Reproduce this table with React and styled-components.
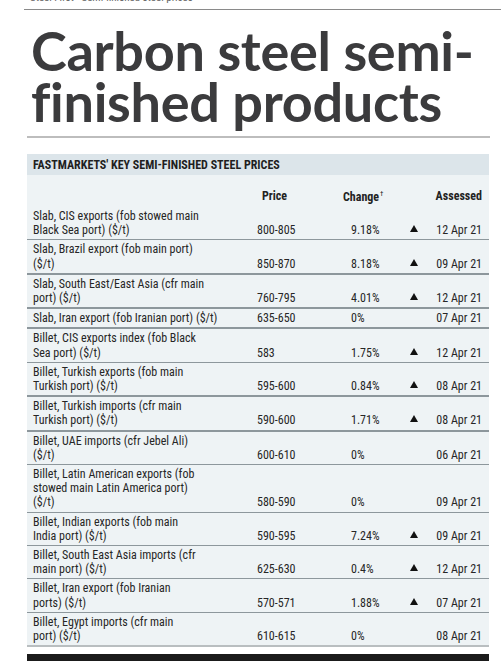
import React from "react";
import styled, { createGlobalStyle } from "styled-components";

const Global = createGlobalStyle`
  html, body { margin: 0; padding: 0; background: #ffffff; }
  body { width: 501px; height: 671px; overflow: hidden; }
`;

const Page = styled.div`
  width: 501px;
  height: 671px;
  overflow: hidden;
  background: #fff;
`;

const Folio = styled.div`
  height: 9px;
  overflow: hidden;
  padding-left: 30px;
  font-family: "Roboto Condensed", "Liberation Sans", sans-serif;
  font-size: 11px;
  line-height: 11px;
  color: #666;
  & > span { display: block; margin-top: -8px; }
`;

const TopRule = styled.div`
  margin-left: 24px;
  border-top: 1px solid #8a8a8a;
`;

const Title = styled.h1`
  margin: 0;
  padding: 15px 0 0 31px;
  font-family: "Lato", "Open Sans", sans-serif;
  font-weight: 700;
  font-size: 54px;
  line-height: 51px;
  letter-spacing: -0.3px;
  color: #3b3b3d;
  white-space: nowrap;
`;

const TitleRule = styled.div`
  margin: 9px 11px 0 27px;
  border-top: 2px solid #bdbdbd;
`;

const Wrap = styled.div`
  margin: 16px 12px 0 27px;
`;

const Table = styled.table`
  width: 462px;
  border-collapse: collapse;
  table-layout: fixed;
  background: #eef3f5;
  font-family: "Roboto Condensed", "Liberation Sans", sans-serif;
  font-size: 12px;
  color: #262626;
`;

const Col = styled.col`
  width: ${(p) => p.$w}px;
`;

const Caption = styled.th`
  background: #dce5ea;
  height: 21px;
  padding: 0 0 0 6px;
  text-align: left;
  font-weight: 700;
  font-size: 12px;
  color: #1f1f1f;
  white-space: nowrap;
`;

const HeadCell = styled.th`
  font-weight: 700;
  padding: 12px ${(p) => p.$pr || 0}px 3px ${(p) => p.$pl || 0}px;
  line-height: 14px;
  text-align: ${(p) => p.$align || "left"};
  color: #222;
  white-space: nowrap;
`;

const Dagger = styled.sup`
  font-size: 7px;
  font-weight: 400;
  vertical-align: 5px;
  margin-left: 1px;
`;

const Row = styled.tr`
  border-bottom: ${(p) => (p.$thick ? "2px" : "1px")} solid ${(p) => (p.$light ? "#b9bec0" : "#8d979c")};
`;

const Cell = styled.td`
  vertical-align: bottom;
  line-height: 14.2px;
  padding: 2px ${(p) => p.$pr || 0}px 2px ${(p) => p.$pl || 0}px;
  text-align: ${(p) => p.$align || "left"};
  white-space: nowrap;
`;

const Up = styled.span`
  display: inline-block;
  width: 0;
  height: 0;
  border-left: 4px solid transparent;
  border-right: 4px solid transparent;
  border-bottom: 7px solid #111;
  margin-bottom: 2px;
`;

const BottomBar = styled.div`
  margin: 7px 12px 0 27px;
  height: 7px;
  background: #1b1b1b;
`;

const rows = [
  [["Slab, CIS exports (fob stowed main", "Black Sea port) ($/t)"], "800-805", "9.18%", true, "12 Apr 21", false],
  [["Slab, Brazil export (fob main port)", "($/t)"], "850-870", "8.18%", true, "09 Apr 21", true],
  [["Slab, South East/East Asia (cfr main", "port) ($/t)"], "760-795", "4.01%", true, "12 Apr 21", true],
  [["Slab, Iran export (fob Iranian port) ($/t)"], "635-650", "0%", false, "07 Apr 21", true],
  [["Billet, CIS exports index (fob Black", "Sea port) ($/t)"], "583", "1.75%", true, "12 Apr 21", false],
  [["Billet, Turkish exports (fob main", "Turkish port) ($/t)"], "595-600", "0.84%", true, "08 Apr 21", true],
  [["Billet, Turkish imports (cfr main", "Turkish port) ($/t)"], "590-600", "1.71%", true, "08 Apr 21", true],
  [["Billet, UAE imports (cfr Jebel Ali)", "($/t)"], "600-610", "0%", false, "06 Apr 21", false],
  [["Billet, Latin American exports (fob", "stowed main Latin America port)", "($/t)"], "580-590", "0%", false, "09 Apr 21", false],
  [["Billet, Indian exports (fob main", "India port) ($/t)"], "590-595", "7.24%", true, "09 Apr 21", false],
  [["Billet, South East Asia imports (cfr", "main port) ($/t)"], "625-630", "0.4%", true, "12 Apr 21", false],
  [["Billet, Iran export (fob Iranian", "ports) ($/t)"], "570-571", "1.88%", true, "07 Apr 21", false],
  [["Billet, Egypt imports (cfr main", "port) ($/t)"], "610-615", "0%", false, "08 Apr 21", true],
];

export default function App() {
  return (
    <Page>
      <Global />
      <Folio>
        <span>Steel First · Semi-finished steel prices</span>
      </Folio>
      <TopRule />
      <Title>
        Carbon steel semi-
        <br />
        finished products
      </Title>
      <TitleRule />
      <Wrap>
        <Table>
          <colgroup>
            <Col $w={223} />
            <Col $w={93} />
            <Col $w={59} />
            <Col $w={23} />
            <Col $w={64} />
          </colgroup>
          <thead>
            <tr>
              <Caption colSpan={5}>FASTMARKETS' KEY SEMI-FINISHED STEEL PRICES</Caption>
            </tr>
            <tr>
              <HeadCell />
              <HeadCell $pl={12}>Price</HeadCell>
              <HeadCell colSpan={2}>
                Change<Dagger>†</Dagger>
              </HeadCell>
              <HeadCell $align="right" $pr={7}>
                Assessed
              </HeadCell>
            </tr>
          </thead>
          <tbody>
            {rows.map(([desc, price, change, up, date, thick], i) => (
              <Row key={i} $thick={thick} $light={i === rows.length - 1}>
                <Cell $pl={6}>
                  {desc.map((l, j) => (
                    <React.Fragment key={j}>
                      {j > 0 && <br />}
                      {l}
                    </React.Fragment>
                  ))}
                </Cell>
                <Cell $pl={7}>{price}</Cell>
                <Cell $pl={8}>{change}</Cell>
                <Cell $align="center">{up && <Up />}</Cell>
                <Cell $align="right" $pr={7}>
                  {date}
                </Cell>
              </Row>
            ))}
          </tbody>
        </Table>
      </Wrap>
      <BottomBar />
    </Page>
  );
}
